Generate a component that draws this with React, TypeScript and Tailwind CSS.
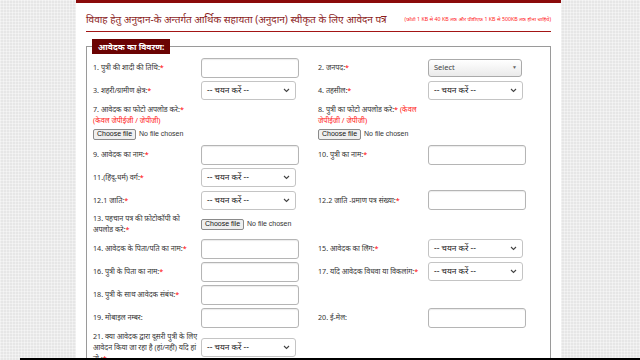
import React from 'react';

const Star = () => <span className="text-[#ff0000]">*</span>;

const TextBox = ({ w = 'w-[98px]' }: { w?: string }) => (
  <div className={`${w} h-[20px] rounded-[3px] border border-[#b5b5b5] bg-white shadow-[inset_0_1px_1px_rgba(0,0,0,0.08)]`} />
);

const Chevron = () => (
  <svg width="7" height="5" viewBox="0 0 7 5" className="shrink-0">
    <path d="M1 1 L3.5 3.5 L6 1" fill="none" stroke="#444" strokeWidth="1.1" />
  </svg>
);

const SelectBox = () => (
  <div className="w-[95px] h-[19px] rounded-[3px] border border-[#c4c4c4] bg-white flex items-center justify-between pl-[5px] pr-[5px] text-[8.4px] text-[#222]">
    <span>-- चयन करें --</span>
    <Chevron />
  </div>
);

const Select2 = () => (
  <div className="w-[94px] h-[18px] rounded-[3px] border border-[#aaa] bg-[linear-gradient(#ffffff,#eaeaea)] flex items-center justify-between pl-[5px] pr-[4px] text-[7.5px] text-[#444]">
    <span>Select</span>
    <span className="text-[5px] text-[#666]">▼</span>
  </div>
);

const FileInput = () => (
  <div className="flex items-center gap-[3px] text-[7px] font-['Liberation_Sans',sans-serif]">
    <div className="h-[11px] px-[3px] flex items-center rounded-[2px] border border-[#8a8a8a] bg-[#efefef] text-[#111]">Choose file</div>
    <span className="text-[#333]">No file chosen</span>
  </div>
);

const Label = ({ children, star = true }: { children: React.ReactNode; star?: boolean }) => (
  <div className="text-[7.2px] leading-[11px] text-[#333] whitespace-nowrap">
    {children}
    {star && <Star />}
  </div>
);

const Row = ({ h = 'h-[23px]', children }: { h?: string; children: React.ReactNode }) => (
  <div className={`grid grid-cols-[108px_117px_110px_1fr] items-center ${h}`}>{children}</div>
);

export default function App() {
  return (
    <div className="relative w-[640px] h-[360px] overflow-hidden bg-[#e6e6e6] bg-[linear-gradient(90deg,rgba(255,255,255,0.35)_1px,transparent_1px),linear-gradient(rgba(255,255,255,0.35)_1px,transparent_1px)] bg-[length:3px_3px] font-['Noto_Sans','Liberation_Sans',sans-serif]">
      <div className="ml-[76px] w-[485px] h-full bg-white">
        <div className="h-[3px] bg-[#8b0a0a]" />
        <div className="mx-[10px] flex items-center justify-between pt-[9px] pb-[5px] border-b-[1.5px] border-[#a31515]">
          <h1 className="text-[10px] leading-[14px] text-[#8b1c1c] whitespace-nowrap">
            विवाह हेतु अनुदान-के अन्तर्गत आर्थिक सहायता (अनुदान) स्वीकृत के लिए आवेदन पत्र
          </h1>
          <span className="text-[5.3px] leading-[10px] text-[#ff2020] whitespace-nowrap">
            (फोटो 1 KB से 40 KB तक और पीडीएफ 1 KB से 500KB तक होना चाहिये)
          </span>
        </div>

        <fieldset className="mx-[10px] mt-[7px] border border-[#9a9a9a] pl-[6px] pr-[4px] pb-[4px]">
          <legend className="ml-[-1px] bg-[#6b0303] text-white text-[8.5px] font-bold leading-[15px] px-[6px]">
            आवेदक का विवरण:
          </legend>

          <div className="mt-[2px]">
            <Row>
              <Label>1. पुत्री की शादी की तिथि:</Label>
              <TextBox />
              <Label>2. जनपद:</Label>
              <Select2 />
            </Row>
            <Row h="h-[22px]">
              <Label>3. शहरी/ग्रामीण क्षेत्र:</Label>
              <SelectBox />
              <Label>4. तहसील:</Label>
              <SelectBox />
            </Row>
            <div className="grid grid-cols-[225px_1fr] h-[42px] pt-[3px]">
              <div className="flex flex-col">
                <Label>7. आवेदक का फोटो अपलोड करे:</Label>
                <div className="text-[7.2px] leading-[11px] text-[#ff2020]">(केवल जेपीईजी / जेपीजी)</div>
                <div className="mt-[3px]"><FileInput /></div>
              </div>
              <div className="flex flex-col">
                <div className="text-[7.2px] leading-[11px] text-[#333] whitespace-nowrap">
                  8. पुत्री का फोटो अपलोड करे:<Star /> <span className="text-[#ff2020]">(केवल</span>
                </div>
                <div className="text-[7.2px] leading-[11px] text-[#ff2020]">जेपीईजी / जेपीजी)</div>
                <div className="mt-[3px]"><FileInput /></div>
              </div>
            </div>
            <Row>
              <Label>9. आवेदक का नाम:</Label>
              <TextBox />
              <Label>10. पुत्री का नाम:</Label>
              <TextBox />
            </Row>
            <Row>
              <Label>11.(हिंदू-धर्म) वर्ग:</Label>
              <SelectBox />
              <div />
              <div />
            </Row>
            <Row h="h-[22px]">
              <Label>12.1 जाति:</Label>
              <SelectBox />
              <Label>12.2 जाति -प्रमाण पत्र संख्या:</Label>
              <TextBox />
            </Row>
            <Row h="h-[26px]">
              <Label>13. पहचान पत्र की फ़ोटोकॉपी को<br />अपलोड करे:</Label>
              <FileInput />
              <div />
              <div />
            </Row>
            <Row>
              <Label>14. आवेदक के पिता/पति का नाम:</Label>
              <TextBox />
              <Label>15. आवेदक का लिंग:</Label>
              <SelectBox />
            </Row>
            <Row>
              <Label>16. पुत्री के पिता का नाम:</Label>
              <TextBox />
              <Label>17. यदि आवेदक विधवा या विकलांग:</Label>
              <SelectBox />
            </Row>
            <Row>
              <Label>18. पुत्री के साथ आवेदक संबंध:</Label>
              <TextBox />
              <div />
              <div />
            </Row>
            <Row>
              <Label star={false}>19. मोबाइल नम्बर:</Label>
              <TextBox />
              <Label star={false}>20. ई-मेल:</Label>
              <TextBox />
            </Row>
            <Row h="h-[36px]">
              <Label>21. क्या आवेदक द्वारा दूसरी पुत्री के लिए<br />आवेदन किया जा रहा है (हां/नहीं) यदि हां<br />तो :</Label>
              <SelectBox />
              <div />
              <div />
            </Row>
          </div>
        </fieldset>
      </div>
      <div className="absolute left-[20px] right-0 bottom-0 h-[2px] bg-black" />
    </div>
  );
}
